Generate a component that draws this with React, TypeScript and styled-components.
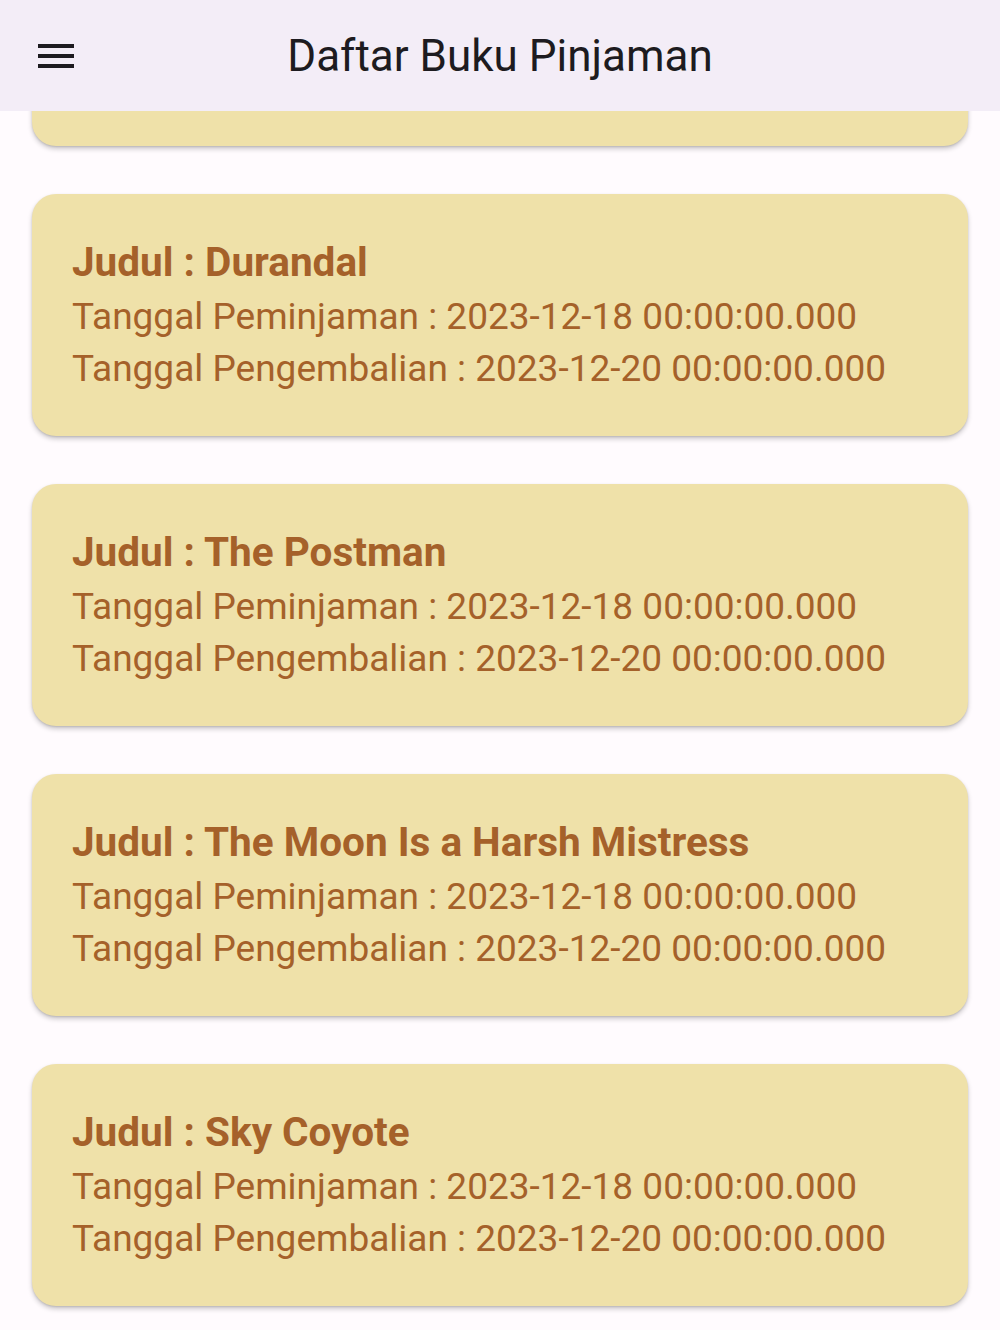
import React from "react";
import styled, { createGlobalStyle } from "styled-components";

const Global = createGlobalStyle`
  html, body { margin: 0; padding: 0; background: #fffbfe; }
  body { font-family: Roboto, "Noto Sans", sans-serif; overflow: hidden; }
`;

const Screen = styled.div`
  width: 1000px;
  height: 1330px;
  display: flex;
  flex-direction: column;
  overflow: hidden;
  background: #fffbfe;
`;

const AppBar = styled.header`
  position: relative;
  flex: 0 0 111px;
  background: #f3edf7;
  display: flex;
  align-items: center;
  justify-content: center;
  z-index: 2;
`;

const MenuButton = styled.button`
  position: absolute;
  left: 38px;
  top: 44px;
  width: 36px;
  height: 24px;
  padding: 0;
  border: 0;
  background: transparent;
  display: flex;
  flex-direction: column;
  justify-content: space-between;
  cursor: pointer;
`;

const MenuLine = styled.span`
  display: block;
  height: 4px;
  width: 36px;
  background: #1d1b20;
`;

const Title = styled.h1`
  margin: 0;
  font-size: 44px;
  font-weight: 400;
  color: #1d1b20;
  letter-spacing: 0;
`;

const Viewport = styled.div`
  flex: 1;
  overflow: hidden;
`;

const List = styled.main`
  display: flex;
  flex-direction: column;
  gap: 48px;
  padding: 0 32px 24px;
  margin-top: -207px;
`;

const Card = styled.section`
  height: 242px;
  box-sizing: border-box;
  background: #efe1a9;
  border-radius: 24px;
  padding: 40px 40px 0;
  box-shadow: 0 3px 5px rgba(0, 0, 0, 0.2), 0 1px 2px rgba(0, 0, 0, 0.12);
  color: #a5612a;
`;

const BookTitle = styled.div`
  font-size: 40.5px;
  font-weight: 700;
  line-height: 57px;
`;

const Line = styled.div`
  font-size: 37px;
  font-weight: 400;
  line-height: 52px;
`;

const books = ["Dune", "Durandal", "The Postman", "The Moon Is a Harsh Mistress", "Sky Coyote"];

export default function App() {
  return (
    <Screen>
      <Global />
      <AppBar>
        <MenuButton aria-label="menu">
          <MenuLine />
          <MenuLine />
          <MenuLine />
        </MenuButton>
        <Title>Daftar Buku Pinjaman</Title>
      </AppBar>
      <Viewport>
        <List>
          {books.map((b) => (
            <Card key={b}>
              <BookTitle>Judul : {b}</BookTitle>
              <Line>Tanggal Peminjaman : 2023-12-18 00:00:00.000</Line>
              <Line>Tanggal Pengembalian : 2023-12-20 00:00:00.000</Line>
            </Card>
          ))}
        </List>
      </Viewport>
    </Screen>
  );
}
